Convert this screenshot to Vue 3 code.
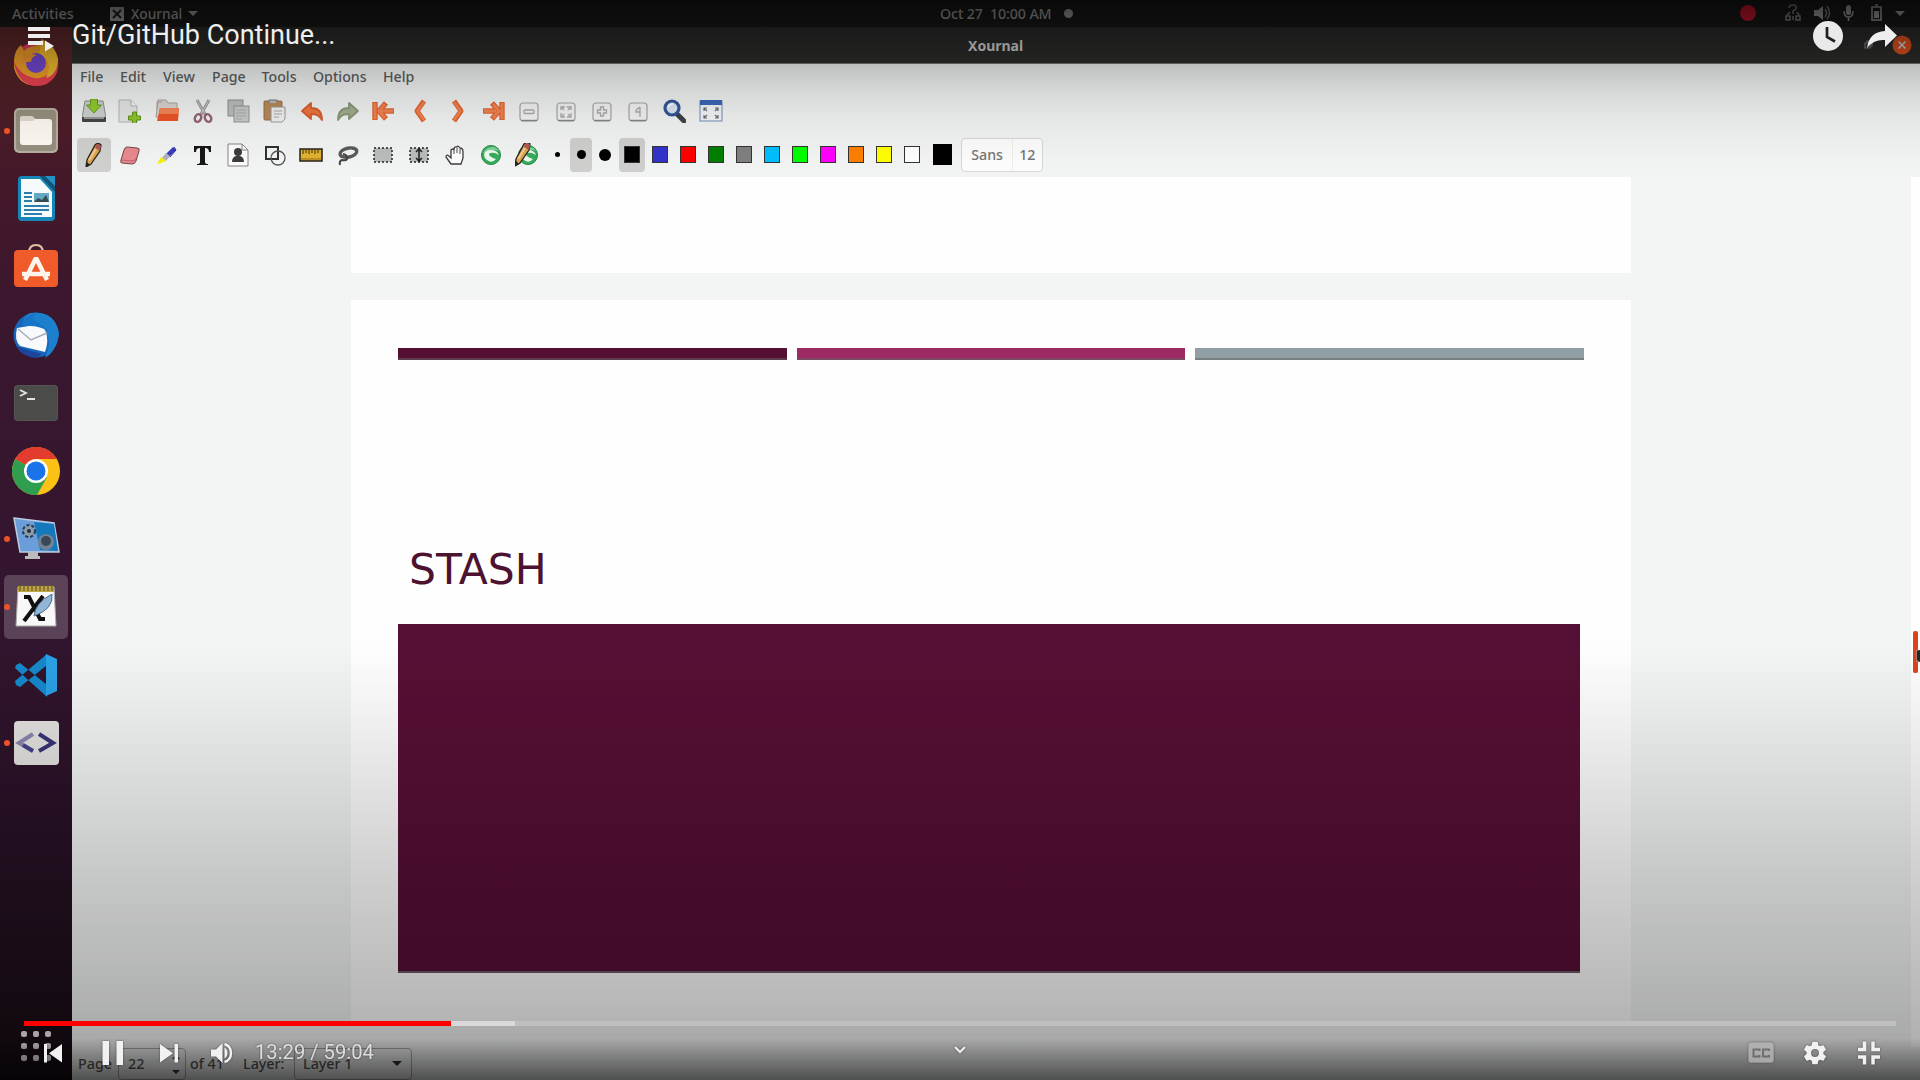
<script setup>
const menus = [
  ['File', 40], ['Edit', 43], ['View', 49], ['Page', 49.5], ['Tools', 51.5], ['Options', 70], ['Help', 50]
]

const arrowBody = 'M3 12L12 4v5c8 0 11 4 11 12c-3-5-6-6-11-6v5z'
const zoomKey = (inner) =>
  `<rect x="3" y="4" width="18" height="18" rx="3" fill="#f3f3f3" stroke="#a5a5a5" stroke-width="1.2"/><path d="M4 21.500h16" stroke="#858585" stroke-width="1.400"/><g fill="none" stroke="#aaa" stroke-width="1.300">${inner}</g>`

const fileTools = [
  '<path d="M3 2h18l3 17H0z" fill="#cfd1cf" stroke="#8c8f8c"/><rect x="0" y="18" width="24" height="5" rx="1" fill="#444"/><path d="M2 18h20v2H2z" fill="#999"/><path d="M8.500 0h7v6h4L12 14L4.500 6h4z" fill="#92cc2d" stroke="#659b1b"/>',
  '<path d="M1 1h12l6 6v16H1z" fill="#e5e7e6" stroke="#b4b4b4"/><path d="M13 1v6h6" fill="#f8f8f8" stroke="#b4b4b4"/><path d="M14.500 13h4v4h4v4h-4v4h-4v-4h-4v-4h4z" fill="#8dc528" stroke="#5f941a"/>',
  '<path d="M3 1h8l2 3h9v14H1z" fill="#d9d5d2" stroke="#aaa39f"/><path d="M2 10V3h5" fill="none" stroke="#bb9c91"/><path d="M5 9h18q1 0 1 1l-1 12H2z" fill="#ee5428"/><path d="M5 9h18q1 0 1 1l-.400 5H4z" fill="#f78759"/>',
  '<path d="M6 1l9 16M18 1L9 17" stroke="#999" stroke-width="3"/><path d="M6 1l9 16M18 1L9 17" stroke="#ccc" stroke-width="1"/><g fill="none" stroke="#956575" stroke-width="2.500"><ellipse cx="7" cy="19" rx="3" ry="4" transform="rotate(25 7 19)"/><ellipse cx="17" cy="19" rx="3" ry="4" transform="rotate(-25 17 19)"/></g>',
  '<rect x="1" y="1" width="15" height="16" fill="#bcbebc" stroke="#8d8f8d"/><rect x="7" y="7" width="15" height="16" fill="#c8cac8" stroke="#929492"/><path d="M9 11h10M9 14h10M9 17h10M9 20h6" stroke="#aaacaa"/>',
  '<rect x="1" y="2" width="18" height="19" rx="1" fill="#b98a58" stroke="#96704a"/><path d="M6 4V1h8v3" fill="#bbb" stroke="#777"/><path d="M8 8h14v12l-3 3H8z" fill="#f0f1f0" stroke="#999"/><path d="M11 12h8M11 15h8M11 18h5" stroke="#aaa"/>',
  `<path d="${arrowBody}" fill="#ee7541" stroke="#d85e2c" stroke-width="1.800" stroke-linejoin="round" transform="translate(-1 0)"/>`,
  `<path d="${arrowBody}" fill="#a1ae8d" stroke="#8b9879" stroke-width="1.800" stroke-linejoin="round" transform="translate(25 0) scale(-1 1)"/>`,
  '<path d="M3 3v18M22 12H9M14 4l-7 8l7 8" fill="none" stroke="#e5652f" stroke-width="5.400" stroke-linejoin="round"/><path d="M3 4v16M21 12H9M13 5l-6 7l6 7" fill="none" stroke="#f18452" stroke-width="2.800"/>',
  '<path d="M15 2L8 12l7 10" fill="none" stroke="#e5652f" stroke-width="5" stroke-linejoin="round"/><path d="M15 3L8.500 12L15 21" fill="none" stroke="#f18452" stroke-width="2.400"/>',
  '<path d="M9 2l7 10l-7 10" fill="none" stroke="#e5652f" stroke-width="5" stroke-linejoin="round"/><path d="M9 3l6.500 9L9 21" fill="none" stroke="#f18452" stroke-width="2.400"/>',
  '<path d="M21 3v18M2 12h12M11 4l7 8l-7 8" fill="none" stroke="#e5652f" stroke-width="5.400" stroke-linejoin="round"/><path d="M21 4v16M3 12h12M12 5l6 7l-6 7" fill="none" stroke="#f18452" stroke-width="2.800"/>',
  zoomKey('<rect x="7" y="11" width="10" height="3.500" rx="1"/>'),
  zoomKey('<path d="M7 11V8h4M17 11V8h-4M7 14v4h4M17 14v4h-4M8 9l2 2M16 9l-2 2M8 17l2-2M16 17l-2-2"/>'),
  zoomKey('<path d="M10.500 8h3v3h3v3h-3v3h-3v-3h-3v-3h3z"/>'),
  zoomKey('<path d="M14 8v9M14 8l-4 3v2h4M14 15v3"/>'),
  '<path d="M15 15l7 7" stroke="#3e4348" stroke-width="5" stroke-linecap="round"/><circle cx="10" cy="9" r="7" fill="#dce7f4" stroke="#33569a" stroke-width="3.200"/><path d="M6 8q2-3 5-3" stroke="#fff" fill="none" stroke-width="1.500"/>',
  '<rect x="1" y="2" width="22" height="20" fill="#f4f6f9" stroke="#708bb5"/><path d="M1 1h22v5H1z" fill="#3c67b8"/><path d="M5 12V9h3M19 12V9h-3M5 16v3h3M19 16v3h-3M5 9l3 3M19 9l-3 3M5 19l3-3M19 19l-3-3" fill="none" stroke="#6c7073" stroke-width="1.200"/>'
]

const pencil = '<path d="M13 2q3-3 6 0l-1 6L9 21l-5 3l1-7z" fill="#dba44f" stroke="#292320" stroke-width="1.300"/><path d="M14 2q3-2 5 1l-1 5l-5-3z" fill="#b05a52"/><path d="M7 17l7-11" stroke="#f0cd96" stroke-width="2"/><path d="M5 19l-1 5l4-2z" fill="#222"/>'
const leafBall = '<circle cx="12" cy="12" r="9.500" fill="#35ad5b" stroke="#26884a"/><path d="M4 10q3-6 9-6q5 0 7 4q-8-3-10 3z" fill="#7dd297"/><path d="M5 12q1-5 7-5q6 0 8 5l-4-2q-4-1-6 1q0 2 4 4l3 1q-4 5-9 1q-3-2-3-5z" fill="#eef9ee"/><path d="M10 11q3-2 6 0l-1 3q-4 0-5-3z" fill="#35ad5b"/>'

const penTools = [
  pencil,
  '<path d="M9 4l10 1q3 0 2 3l-3 10q-1 3-4 3l-10-1q-2 0-1-3L6 7q1-3 3-3z" fill="#e98a90" stroke="#7b4144"/><path d="M4 17l10 1q3 0 4-3" fill="none" stroke="#bd6269"/>',
  '<path d="M19 4l3 3l-10 10l-3-3z" fill="#3838cc"/><path d="M12 10l4 3l-4 5l-4-3z" fill="#b2b2ba"/><path d="M7 14l5 4l-5 2l-4 1z" fill="#f5f000"/><path d="M20 4l2 3l-6 7" stroke="#252582" fill="none"/>',
  '<path d="M4 3h17v6h-2q0-4-4-4v14q0 2 3 2v1H7v-1q3 0 3-2V5Q6 5 6 9H4z" fill="#171717"/>',
  '<path d="M2 1h14l6 6v16H2z" fill="#fdfdfd" stroke="#858585"/><path d="M16 1v6h6" fill="none" stroke="#858585"/><circle cx="12" cy="9" r="4" fill="#3c3c3c"/><path d="M6 19q0-5 4-6h4q4 1 4 6z" fill="#3c3c3c"/>',
  '<path d="M3 4h12v12H3z" fill="none" stroke="#313131" stroke-width="2"/><circle cx="15" cy="15" r="7" fill="none" stroke="#555" stroke-width="1.300"/>',
  '<rect x="1" y="6" width="22" height="12" fill="#e2b12f" stroke="#252018" stroke-width="1.500"/><path d="M4 7v4M7 7v3M10 7v4M13 7v3M16 7v4M19 7v3" stroke="#3b2c0d"/><path d="M2 16h20" stroke="#9c7319"/>',
  '<ellipse cx="13.500" cy="9.500" rx="8.500" ry="4.500" fill="none" stroke="#5a5a5a" stroke-width="3.400" transform="rotate(-12 14 10)"/><path d="M8 11q5 1 4 5q-1 2-5 1q-3 1-2 5" fill="none" stroke="#444" stroke-width="2"/>',
  '<rect x="3" y="5" width="18" height="14" fill="#bbbdbd" stroke="#222" stroke-width="1.500" stroke-dasharray="2 2"/>',
  '<rect x="3" y="5" width="18" height="14" fill="#bbbdbd" stroke="#222" stroke-width="1.500" stroke-dasharray="2 2"/><path d="M12 5v14M9 9l3-3l3 3M9 15l3 3l3-3" fill="none" stroke="#242424" stroke-width="1.600"/>',
  '<path d="M8 21l-5-7q0-3 3-1l2 2V7q2-2 3 0q0-4 3-3q1-2 3 1q3 0 3 4v6l-2 6z" fill="#fff" stroke="#3d3d3d" stroke-width="1.300"/><path d="M11 7v4M14 5v5M17 6v5" stroke="#4b4b4b"/>',
  leafBall,
  `<g transform="translate(1 0)">${leafBall}</g><g transform="translate(-4 -1)">${pencil}</g>`
]

const colors = ['#000000', '#3333cc', '#ff0000', '#008000', '#808080', '#00c0ff', '#00ff00', '#ff00ff', '#ff8000', '#ffff00', '#ffffff']

const dock = [
  { run: false, art: '<circle cx="24" cy="25" r="22" fill="#ed3e62"/><path d="M2 21Q3 10 9 6l3 6q5-5 12-5l6-7q14 8 16 20q1 20-17 25Q8 50 2 29z" fill="#f2a128"/><path d="M2 23q6 13 20 16q15 2 24-17q2 17-14 24Q7 51 2 23z" fill="#ee4253"/><path d="M30 1q14 6 16 20q-1 15-12 18q8-17-7-24z" fill="#f5bd2d"/><circle cx="24" cy="24" r="10" fill="#7449d6"/><path d="M12 13q7 2 13 3q-6 2-6 7q-5-1-8 3q-2-7 1-13z" fill="#f1972c"/>' },
  { run: true, art: '<rect x="2" y="1" width="44" height="45" rx="5" fill="#b7b0a2"/><rect x="4" y="3" width="40" height="41" rx="4" fill="#969080"/><path d="M8 34V12q0-3 3-3h9l3 3h14q3 0 3 3v20q0 3-3 3H11q-3 0-3-3z" fill="#fffaf3"/><path d="M8 14V12q0-3 3-3h9l3 3l-2 2z" fill="#e4d9cf"/>' },
  { run: false, art: '<path d="M10 1h18l15 15v26q0 4-4 4H10q-4 0-4-4V5q0-4 4-4z" fill="#1685b8"/><path d="M9 4h19l12 13v25H9z" fill="#f6fafb"/><path d="M28 1l15 16V1z" fill="#125579"/><path d="M33 1h10v10z" fill="#2292c7"/><g stroke="#297eae" stroke-width="2"><path d="M12 18h8M12 22h8M12 26h8M12 31h25M12 35h25M12 39h18"/></g><rect x="22" y="18" width="15" height="9" fill="#65a8c5"/><path d="M22 27l4-4l4 2l4-5l3 7z" fill="#354d51"/>' },
  { run: false, art: '<path d="M17 10q0-8 7-8t7 8" fill="none" stroke="#dec0a6" stroke-width="2.200"/><rect x="2" y="7" width="44" height="37" rx="4" fill="#f15a29"/><path d="M13 37l11-22l11 22M10 31h28" fill="none" stroke="#fff4ec" stroke-width="4.500" stroke-linejoin="bevel"/>' },
  { run: false, art: '<circle cx="24" cy="24" r="22.500" fill="#1667bc"/><path d="M18 2q25-3 29 20q-2 18-14 25q11-25-8-28q-8 0-14-7q1-7 7-10z" fill="#1c80cf"/><path d="M5 17l24-4q10 12 4 28L8 35q-6-6-3-18z" fill="#f8f9fc"/><path d="M6 18l13 11l16-7" fill="none" stroke="#a7abb9" stroke-width="1.500"/><path d="M10 15q2-11 15-13q-7 5-2 8q7 2 13 10q-9-5-18-5z" fill="#1775c7"/><path d="M4 35q10 4 26 8l-6 4q-15-2-20-12z" fill="#1c449b"/>' },
  { run: false, art: '<rect x="2" y="6" width="44" height="36" rx="4" fill="#555553"/><rect x="3" y="7" width="42" height="34" rx="3" fill="#4b4b49"/><path d="M8 11l6 3l-6 3M15 20h8" fill="none" stroke="#e4e4e4" stroke-width="1.800"/>' },
  { run: false, art: '<circle cx="24" cy="24" r="24" fill="#fbc116"/><path d="M24 24L3.200 12A24 24 0 0 1 44.800 12z" fill="#e33b2e"/><path d="M24 24L3.200 12A24 24 0 0 0 25 48L35 30z" fill="#2f9e4f"/><path d="M24 12h21L35 30L24 24z" fill="#fbc116"/><circle cx="24" cy="24" r="12" fill="#fff"/><circle cx="24" cy="24" r="9.500" fill="#1a73e8"/>' },
  { run: true, art: '<path d="M2 3l40 5l5 29H8z" fill="#6b9dda" stroke="#bacbe0" stroke-width="1.500"/><path d="M22 7l20 2l4 27l-18-1z" fill="#1478bd"/><path d="M16 37h10v4h2v3H13v-3h3z" fill="#bcbcbc"/><circle cx="17" cy="16" r="6" fill="#8b9baa" stroke="#263b50" stroke-width="2" stroke-dasharray="3 2"/><circle cx="17" cy="16" r="2" fill="#222e3e"/><circle cx="34" cy="27" r="8" fill="#728394"/><circle cx="34" cy="26" r="5" fill="#3a4855"/>' },
  { run: true, active: true, art: '<path d="M6 4h36l2 39H4z" fill="#f8f8f8" stroke="#a9a9a9"/><path d="M6 3h36v6H6z" fill="#bda643"/><path d="M8 2v6M12 2v6M16 2v6M20 2v6M24 2v6M28 2v6M32 2v6M36 2v6M40 2v6" stroke="#6d5d28" stroke-width="1.300"/><path d="M12 14h5l11 22h5M31 13L12 38" fill="none" stroke="#111" stroke-width="4"/><path d="M40 11q2 15-18 22q1-13 18-22z" fill="#92b6d5" stroke="#4d7193"/>' },
  { run: false, art: '<path d="M4 14l4-2l27 22v12L3 17zM4 34l4 2l27-22V3L3 30z" fill="#1688ca"/><path d="M34 3l11 5v32l-11 5z" fill="#2ba1e5"/>' },
  { run: true, art: '<rect x="2" y="2" width="45" height="44" rx="4" fill="#e3e2e1"/><path d="M21 15L7 24l14 8" fill="none" stroke="#8b86ac" stroke-width="4"/><path d="M11 26l10 6" stroke="#45428a" stroke-width="4"/><path d="M27 15l14 9l-14 8" fill="none" stroke="#393477" stroke-width="4"/>' }
]
</script>

<template>
  <div class="player">
    <div class="desktop">
      <header class="topbar">
        <span class="activities">Activities</span>
        <span class="app-menu">
          <svg width="14" height="14" viewBox="0 0 14 14"><rect width="14" height="14" rx="1" fill="#aaa" /><path d="M3 3l8 8M11 3l-8 8" stroke="#222" stroke-width="2" /></svg>
          <span>Xournal</span><i class="caret"></i>
        </span>
        <span class="date">Oct 27&nbsp; 10:00 AM</span>
        <i class="notice"></i>
        <svg class="tray" width="180" height="27" viewBox="0 0 180 27">
          <circle cx="18" cy="13" r="8" fill="#dc1733" />
          <g fill="none" stroke="#888" stroke-width="1.500"><path d="M63 14v-3l3-2q1-4-3-4t-4 3" /><path d="M56 20v-4h4v4zM66 20v-4h4v4zM63 16v4M57 15l3-3M69 15l-2-3" /></g>
          <path d="M84 10h4l5-4v14l-5-4h-4z" fill="#aaa" /><path d="M95 9q3 4 0 8M97 6q5 7 0 13" fill="none" stroke="#888" stroke-width="1.500" />
          <rect x="116" y="5" width="5" height="10" rx="2.500" fill="#aaa" /><path d="M114 11q0 6 4.500 6t4.500-6M118.500 17v4" fill="none" stroke="#aaa" stroke-width="1.500" />
          <path d="M142 7h9v13h-9zM145 5h3" fill="none" stroke="#aaa" stroke-width="1.600" /><path d="M144 11h5v7h-5z" fill="#aaa" />
          <path d="M165 11h10l-5 5z" fill="#aaa" />
        </svg>
      </header>

      <div class="body">
        <nav class="dock">
          <div v-for="(app, i) in dock" :key="i" class="app" :class="{ active: app.active }">
            <i v-if="app.run" class="running"></i>
            <svg width="48" height="48" viewBox="0 0 48 48" v-html="app.art"></svg>
          </div>
          <div class="apps-grid"><i v-for="n in 9" :key="n"></i></div>
        </nav>

        <section class="window">
          <div class="titlebar">
            <strong>Xournal</strong>
            <svg class="win-buttons" width="60" height="36" viewBox="0 0 60 36"><path d="M5 16h5v5H5zM7 16v-2h5v5h-2" fill="none" stroke="#888" stroke-width="1.200" /><circle cx="42" cy="18" r="9.500" fill="#e95420" /><path d="M38.500 14.500l7 7M45.500 14.500l-7 7" stroke="#ddd" stroke-width="1.700" /></svg>
          </div>
          <div class="menubar"><span v-for="m in menus" :key="m[0]" :style="{ width: m[1] + 'px' }">{{ m[0] }}</span></div>
          <div class="toolbar first"><span v-for="(t, i) in fileTools" :key="i" class="tool"><svg width="24" height="24" viewBox="0 0 24 24" v-html="t"></svg></span></div>
          <div class="toolbar second">
            <span v-for="(t, i) in penTools" :key="i" class="tool" :class="{ on: i === 0 }"><svg width="24" height="24" viewBox="0 0 24 24" v-html="t"></svg></span>
            <span class="dot-cell"><i class="dot small"></i></span>
            <span class="dot-cell on"><i class="dot medium"></i></span>
            <span class="dot-cell"><i class="dot large"></i></span>
            <span v-for="(c, i) in colors" :key="c" class="swatch-cell" :class="{ on: i === 0 }"><i :style="{ background: c }"></i></span>
            <i class="current-color"></i>
            <span class="font-button"><b>Sans</b><b>12</b></span>
          </div>
          <div class="canvas">
            <div class="sheets">
              <div class="sheet previous"></div>
              <div class="sheet slide">
                <div class="stripes"><i></i><i></i><i></i></div>
                <h1>STASH</h1>
                <div class="block"></div>
              </div>
            </div>
            <div class="scroll"><i></i><svg width="4" height="12" viewBox="0 0 4 12"><path d="M4 0L1 1v9l3 2z" fill="#192b25" /></svg></div>
          </div>
          <footer class="status">
            <span class="lbl-page">Page</span>
            <span class="spin"><em>22</em><svg width="10" height="24" viewBox="0 0 10 24"><path d="M1 7l4-4l4 4zM1 18h8l-4 4z" fill="#333" /></svg></span>
            <span class="lbl-of">of 41</span>
            <span class="lbl-layer">Layer:</span>
            <span class="combo">Layer 1<i class="caret"></i></span>
          </footer>
        </section>
      </div>
    </div>

    <div class="shade top"></div>
    <div class="shade bottom"></div>

    <div class="chrome-top">
      <svg width="30" height="30" viewBox="0 0 30 30"><path d="M2 3h22v4H2zM2 10h22v4H2zM2 17h15v4H2zM19 16.500l9 5.500l-9 5.500z" fill="#eee" /></svg>
      <span class="title">Git/GitHub Continue...</span>
      <svg class="actions" width="90" height="40" viewBox="0 0 90 40">
        <circle cx="18" cy="20" r="15" fill="#e9e9e9" /><path d="M17 11v10l8 4.500" fill="none" stroke="#202020" stroke-width="2.700" />
        <path d="M75 8l12 11.500L75 31v-7q-11-1-18 8q2-16 18-17z" fill="#eee" />
      </svg>
    </div>

    <div class="chrome-bottom">
      <div class="progress"><i class="played"></i><i class="buffered"></i></div>
      <div class="controls">
        <svg class="transport" width="200" height="40" viewBox="40 1032 200 40" fill="#f1f1f1">
          <path d="M44 1044h3v18.500h-3zM62 1044v18.500l-13-9.250z" />
          <path d="M102.500 1041h6.500v24h-6.500zM116.500 1041h6.500v24h-6.500z" />
          <path d="M160 1044v18.500l13-9.250zM174.500 1044h3.500v18.500h-3.500z" />
          <path d="M211 1049.500h5l6.500-6.500v20l-6.500-6.500h-5zM224.500 1047.500q3 2 3 5.500t-3 5.500z" /><path d="M224.500 1044q6.500 2 6.500 9t-6.500 9" fill="none" stroke="#f1f1f1" stroke-width="2.400" />
        </svg>
        <span class="time">13:29 / 59:04</span>
        <svg class="more" width="14" height="10" viewBox="0 0 14 10"><path d="M2 2l5 5l5-5" fill="none" stroke="#eee" stroke-width="2.200" /></svg>
        <svg class="options" width="140" height="40" viewBox="1744 1032 140 40">
          <g opacity=".65"><rect x="1748.500" y="1042.500" width="25" height="20" rx="2.500" fill="#d5d5d5" stroke="#aaa" /><path d="M1759.500 1051v-1.500h-6v7h6v-1.500M1769 1051v-1.500h-6v7h6v-1.500" fill="none" stroke="#777" stroke-width="2" /></g>
          <svg x="1801.500" y="1039" width="27" height="28" viewBox="0 0 24 24"><path fill="#f1f1f1" d="M19.430 12.980c.04-.32.070-.64.070-.98s-.03-.66-.070-.98l2.110-1.650c.19-.15.24-.42.120-.64l-2-3.460c-.12-.22-.39-.3-.61-.22l-2.490 1c-.52-.4-1.080-.73-1.690-.98l-.38-2.650C14.460 2.180 14.250 2 14 2h-4c-.25 0-.46.18-.49.42l-.38 2.650c-.61.25-1.170.59-1.690.98l-2.490-1c-.23-.09-.49 0-.61.22l-2 3.460c-.13.22-.07.49.12.64l2.110 1.650c-.04.32-.07.65-.07.98s.03.66.07.98l-2.110 1.650c-.19.15-.24.42-.12.64l2 3.460c.12.22.39.3.61.22l2.490-1c.52.4 1.080.73 1.690.98l.38 2.650c.03.24.24.42.49.42h4c.25 0 .46-.18.49-.42l.38-2.650c.61-.25 1.170-.59 1.690-.98l2.490 1c.23.09.49 0 .61-.22l2-3.460c.12-.22.07-.49-.12-.64zM12 15.500a3.500 3.500 0 1 1 0-7a3.500 3.500 0 0 1 0 7z" /></svg>
          <path d="M1864.500 1041.500v8h-6.500M1873 1041.500v8h7M1858 1057h6.500v7.500M1880 1057h-7v7.500" fill="none" stroke="#f1f1f1" stroke-width="3.500" />
        </svg>
      </div>
    </div>
  </div>
</template>

<style>
body { margin: 0; overflow: hidden; }
</style>

<style scoped>
* { box-sizing: border-box; }
svg { display: block; flex: none; }
.player { position: relative; width: 1920px; height: 1080px; overflow: hidden; font-family: "Noto Sans", "Open Sans", sans-serif; font-size: 14px; line-height: 20px; }
.desktop { height: 1080px; display: flex; flex-direction: column; background: #f3f5f4; }
.topbar { height: 27px; display: flex; align-items: center; background: #1a1a19; color: #aaa; font-weight: 500; flex: none; }
.activities { width: 98px; padding-left: 12px; font-size: 14.300px; }
.app-menu { display: flex; align-items: center; gap: 7px; width: 842px; padding-left: 12px; font-size: 13.700px; line-height: 16px; }
.app-menu .caret { margin-left: -1px; }
.caret { border: 5px solid transparent; border-top-color: #aaa; border-bottom: 0; }
.date { width: 124px; font-size: 14.200px; white-space: nowrap; letter-spacing: -.1px; }
.notice { width: 9px; height: 9px; border-radius: 50%; background: #aaa; }
.tray { margin-left: auto; margin-right: 10px; }
.body { flex: 1; display: flex; min-height: 0; }
.dock { width: 72px; flex: none; display: flex; flex-direction: column; padding-top: 2px; background: linear-gradient(#642a2d 0, #512026 60px, #45182a 150px, #39172f 320px, #34152f 550px, #2c1229 750px, #1d0f1b 960px, #150b13 1053px); }
.app { position: relative; height: 68px; flex: none; display: flex; align-items: center; justify-content: center; }
.app.active::before { content: ""; position: absolute; inset: 2px 4px 2px; border-radius: 5px; background: rgba(255, 255, 255, .2); }
.app svg { position: relative; }
.running { position: absolute; left: 4px; top: 31px; width: 6px; height: 6px; border-radius: 50%; background: #ee5328; z-index: 1; }
.apps-grid { margin: auto 0 19px 21px; display: grid; grid-template-columns: repeat(3, 6px); gap: 6px; }
.apps-grid i { height: 6px; border-radius: 2px; background: #f5e9f2; }
.window { flex: 1; display: flex; flex-direction: column; min-width: 0; }
.titlebar { position: relative; height: 37px; display: flex; align-items: center; background: #2d2d2c; color: #dedede; padding-left: 896px; border-bottom: 1px solid #777; }
.titlebar strong { font-size: 14px; font-weight: 700; padding-top: 2px; }
.win-buttons { margin-left: auto; }
.menubar { height: 27px; display: flex; align-items: center; padding: 0 0 2px 8px; color: #5d5f5e; font-size: 14.200px; font-weight: 500; }
.toolbar { display: flex; align-items: center; padding-left: 4px; }
.first { height: 40px; }
.first .tool { width: 36.270px; }
.second { height: 46px; padding-top: 1px; }
.tool { width: 36.100px; height: 34px; display: flex; align-items: center; justify-content: center; flex: none; }
.tool.on { width: 34px; margin: 0 1.050px; background: #d0d0cf; border-radius: 4px; }
.dot-cell { width: 24px; height: 34px; display: flex; align-items: center; justify-content: center; flex: none; }
.dot-cell.on { width: 22px; margin: 0 1px; background: #cfcfce; border-radius: 4px; }
.dot { border-radius: 50%; background: #000; }
.small { width: 5px; height: 5px; }
.medium { width: 9px; height: 9px; }
.large { width: 12px; height: 12px; }
.swatch-cell { width: 28px; height: 34px; display: flex; align-items: center; justify-content: center; flex: none; }
.swatch-cell.on { width: 26px; margin: 0 1px 0 2px; background: #cfcfce; border-radius: 4px; }
.swatch-cell i { width: 16px; height: 17px; border: 1px solid #343434; }
.current-color { width: 19px; height: 21px; background: #000; margin-left: 7px; }
.font-button { width: 82px; height: 34px; margin-left: 9px; display: flex; align-items: center; background: #fdfdfd; border: 1.500px solid #d8d8d8; border-radius: 4px; color: #747474; font-size: 14.200px; }
.font-button b { font-weight: 500; padding-left: 6px; }
.font-button b:first-child { width: 51px; height: 100%; line-height: 31px; padding-left: 9px; border-right: 1px solid #f0ecea; }
.canvas { height: 870px; display: flex; flex: none; }
.sheets { width: 1839px; height: 844px; padding-left: 279px; }
.sheet { width: 1280px; background: #fefefe; }
.previous { height: 96px; margin-bottom: 27px; }
.slide { height: 721px; padding: 48px 0 0 47px; }
.stripes { display: flex; gap: 10px; }
.stripes i { width: 388.700px; height: 12px; border-bottom: 2px solid rgba(100, 100, 100, .55); background: #540f32; }
.stripes i:nth-child(2) { background: #9e2a63; }
.stripes i:nth-child(3) { background: #8f9fa3; }
.slide h1 { margin: 185px 0 0 11px; height: 79px; font: 400 42.500px/50px "DejaVu Sans", sans-serif; color: #4d1230; }
.block { width: 1182px; height: 349px; background: #560f34; border-bottom: 2px solid #6c5964; }
.scroll { width: 9px; position: relative; background: #fefefe; }
.scroll i { position: absolute; left: 2px; top: 454px; width: 5px; height: 42px; border-radius: 2px; background: #dd421b; }
.scroll svg { position: absolute; right: 0; top: 473px; background: #b8786a; }
.status { flex: 1; display: flex; align-items: center; padding-left: 6px; color: #555; background: #f3f5f4; font-size: 14.300px; font-weight: 500; }
.lbl-page { width: 40px; }
.spin { width: 68px; height: 32px; border: 1px solid #aaa; border-radius: 4px; display: flex; align-items: center; justify-content: space-between; padding: 0 4px 0 9px; }
.spin em { font-style: normal; }
.lbl-of { width: 53px; margin-left: 4px; }
.lbl-layer { width: 51px; }
.combo { width: 118px; height: 32px; border: 1px solid #aaa; border-radius: 4px; display: flex; align-items: center; justify-content: space-between; padding: 0 9px 0 8px; }
.combo .caret { border-top-color: #333; }
.shade { position: absolute; left: 0; right: 0; pointer-events: none; }
.shade.top { top: 0; height: 180px; background: linear-gradient(rgba(0, 0, 0, .64) 0, rgba(0, 0, 0, .45) 27px, rgba(0, 0, 0, .32) 46px, rgba(0, 0, 0, .22) 64px, rgba(0, 0, 0, .12) 90px, rgba(0, 0, 0, .055) 120px, rgba(0, 0, 0, .01) 160px, transparent 180px); }
.shade.bottom { top: 640px; height: 440px; background: linear-gradient(transparent 0, rgba(0, 0, 0, .01) 20px, rgba(0, 0, 0, .05) 73px, rgba(0, 0, 0, .105) 140px, rgba(0, 0, 0, .19) 240px, rgba(0, 0, 0, .275) 360px, rgba(0, 0, 0, .305) 398px, rgba(0, 0, 0, .51) 420px, rgba(0, 0, 0, .68) 440px); }
.chrome-top { position: absolute; left: 0; right: 0; top: 16px; height: 40px; display: flex; align-items: center; padding-left: 26px; }
.chrome-top > svg:first-child { align-self: flex-start; margin-top: 8px; }
.title { margin-left: 16px; margin-top: -2px; font-family: Roboto, sans-serif; font-size: 27px; line-height: 36px; color: #eee; white-space: nowrap; }
.actions { margin-left: auto; margin-right: 20px; }
.chrome-bottom { position: absolute; left: 0; right: 0; top: 1021px; }
.progress { margin: 0 24px; height: 5px; display: flex; background: #bfbfbe; }
.played { width: 427px; background: #f00; }
.buffered { width: 64px; background: #d8d9d8; }
.controls { height: 40px; margin-top: 6px; display: flex; align-items: center; padding-left: 40px; filter: drop-shadow(0 0 1px rgba(0, 0, 0, .45)); }
.time { width: 130px; margin-left: 15px; font: 400 20.200px/28px Roboto, sans-serif; color: #ddd; white-space: nowrap; }
.more { margin: -4px 0 0 568px; }
.options { margin-left: auto; margin-right: 36px; }
</style>
